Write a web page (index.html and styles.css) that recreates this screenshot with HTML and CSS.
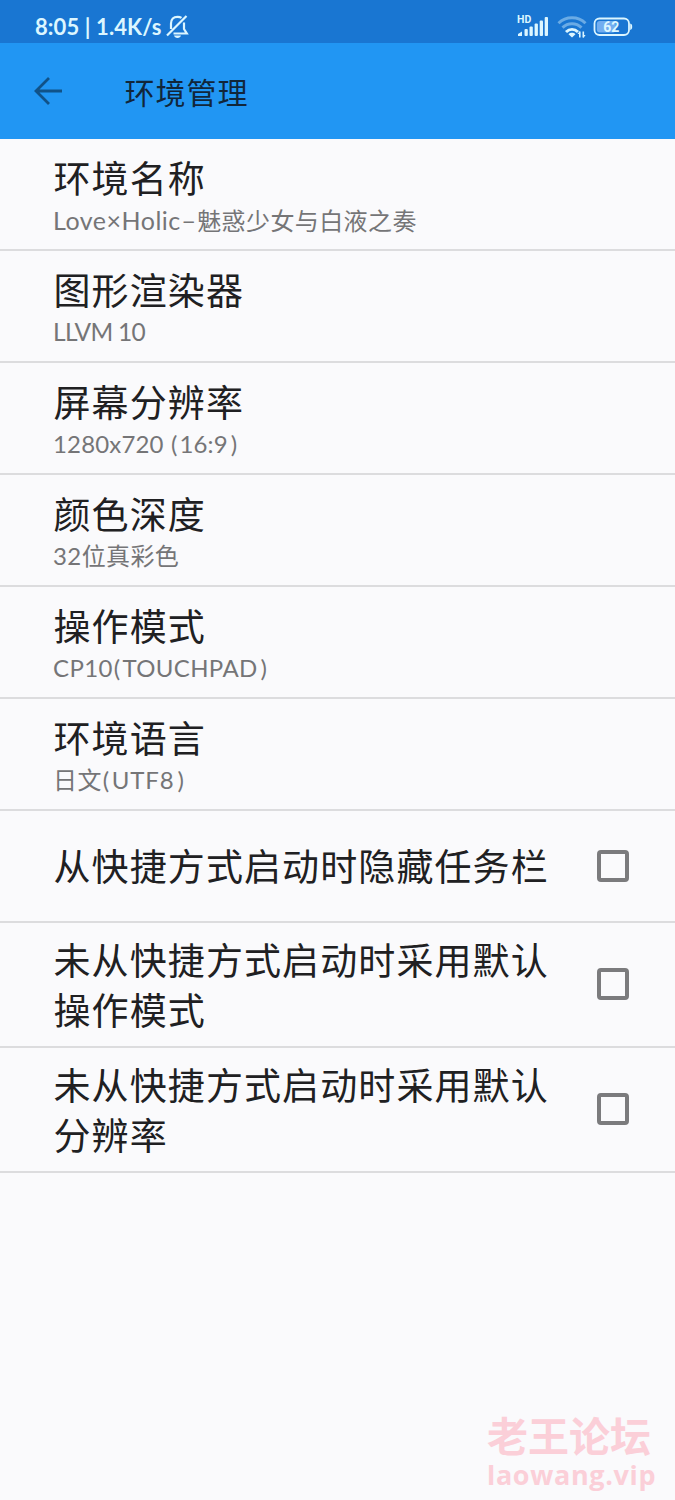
FILE: index.html
```html
<!DOCTYPE html>
<html lang="zh-CN">
<head>
<meta charset="utf-8">
<title>环境管理</title>
<link rel="stylesheet" href="styles.css">
</head>
<body>
<div class="screen">
  <div class="status">
    <span class="clock">8:05 | 1.4K/s</span>
    <svg class="bell" width="24" height="26" viewBox="0 0 24 26" fill="none" stroke="currentColor" stroke-width="2.200">
      <path d="M5 15V9.500C5 5 7.500 2.800 11.500 2.800c1.600 0 2.900.3 4 1.100M18 8.500v6.500l2.800 4.500H7.500M1 21.500 20.500 2"/>
      <path d="M8 21.500h7c-.4 1.600-1.700 2.500-3.500 2.500S8.400 23.100 8 21.500z" fill="currentColor" stroke="none"/>
    </svg>
    <div class="indicators">
      <div class="mobile">
        <span class="hd">HD</span>
        <svg width="32" height="22" viewBox="0 0 32 22" fill="currentColor">
          <path d="M1 20v-2l4-2.500V20z"/><rect x="7.500" y="13" width="3.300" height="7" rx="1"/><rect x="12.500" y="10.500" width="3.300" height="9.500" rx="1"/><rect x="17.600" y="7.500" width="3.300" height="12.500" rx="1"/><rect x="22.700" y="4.500" width="3.300" height="15.500" rx="1"/><rect x="27.700" y="1" width="3.300" height="19" rx="1"/>
        </svg>
      </div>
      <svg class="wifi" width="30" height="24" viewBox="0 0 30 24" fill="none" stroke="currentColor" stroke-width="3">
        <g opacity=".42"><path d="M1.500 8.200c7.500-7.300 19.500-7.300 27 0M5.500 12.600c5.400-5.200 13.600-5.200 19 0"/></g>
        <path d="M9 17c3.600-3.500 8.400-3.500 12 0"/>
        <path d="M11.500 19.200c1.900-1.900 5.100-1.900 7 0L15 22.500z" fill="currentColor" stroke="none"/>
        <path d="M22.800 16.500v6M26.300 16.500v6" stroke-width="1.600"/><path d="m20.500 19 2.300-3v3zM28.600 20l-2.300 3V20z" fill="currentColor" stroke="none"/>
      </svg>
      <svg class="battery" width="40" height="20" viewBox="0 0 40 20">
        <rect x="3.800" y="4" width="19" height="11.500" rx="3" fill="#72aef0"/>
        <rect x="1.500" y="1.500" width="34.500" height="16.500" rx="5" fill="none" stroke="currentColor" stroke-width="1.800"/>
        <path d="M37.200 6.500c1.500.5 2 1.300 2 3.200s-.5 2.700-2 3.200z" fill="currentColor"/>
        <text x="18.300" y="15" text-anchor="middle" class="level">62</text>
      </svg>
    </div>
  </div>
  <header class="toolbar">
    <svg class="back" width="30" height="30" viewBox="0 0 30 30" fill="none" stroke="currentColor" stroke-width="2.800"><path d="M29 15H3M16 2 3 15l13 13"/></svg>
    <h1>环境管理</h1>
  </header>
  <main>
    <div class="row"><div class="title">环境名称</div><div class="value"><span class="name">Love×Holic</span><span class="dash">−</span>魅惑少女与白液之奏</div></div>
    <div class="row"><div class="title">图形渲染器</div><div class="value renderer">LLVM 10</div></div>
    <div class="row"><div class="title">屏幕分辨率</div><div class="value resolution">1280x720 <span class="paren">(</span>16:9<span class="close">)</span></div></div>
    <div class="row"><div class="title">颜色深度</div><div class="value">32位真彩色</div></div>
    <div class="row"><div class="title">操作模式</div><div class="value mode">CP10<span class="paren">(</span>TOUCHPAD<span class="close">)</span></div></div>
    <div class="row"><div class="title">环境语言</div><div class="value">日文<span class="paren">(</span><span class="utf">UTF8</span><span class="close">)</span></div></div>
    <div class="row check"><div class="title">从快捷方式启动时隐藏任务栏</div><span class="box"></span></div>
    <div class="row check tall"><div class="title">未从快捷方式启动时采用默认<br>操作模式</div><span class="box"></span></div>
    <div class="row check tall"><div class="title">未从快捷方式启动时采用默认<br>分辨率</div><span class="box"></span></div>
  </main>
  <footer class="mark"><div class="forum">老王论坛</div><div class="site">laowang.vip</div></footer>
</div>
</body>
</html>
```
FILE: styles.css
```css
* { box-sizing: border-box; }
body { margin: 0; background: #fafafc; font-family: Lato, "Noto Sans CJK SC", sans-serif; }
.screen { width: 675px; height: 1500px; display: flex; flex-direction: column; overflow: hidden; }
.status { height: 43px; flex: none; background: #1976d2; color: #dcf6ff; display: flex; align-items: center; padding: 10px 42px 0 35px; }
.clock { font-size: 22px; line-height: 32px; font-weight: 700; letter-spacing: .1px; white-space: nowrap; width: 131px; }
.bell { flex: none; }
.indicators { margin-left: auto; display: flex; align-items: center; }
.mobile { position: relative; width: 32px; height: 22px; margin-right: 8px; }
.hd { position: absolute; left: 0; top: -2px; font: 700 10.500px/12px Roboto, sans-serif; }
.wifi { margin-right: 6px; }
.level { font: 700 14px Roboto, sans-serif; fill: currentColor; }
.toolbar { height: 96px; flex: none; background: #2196f3; display: flex; align-items: center; padding-left: 33px; }
.back { color: #105288; }
h1 { margin: 1px 0 0 61.500px; font-size: 30px; line-height: 44px; font-weight: 400; letter-spacing: 1px; color: #11263a; }
.row { height: 112px; border-bottom: 2px solid #dcdcde; padding: 13px 46px 0 53px; }
.title { font-family: "Noto Sans CJK SC", sans-serif; font-size: 37px; line-height: 50px; letter-spacing: 1.100px; color: #202022; white-space: nowrap; }
.row .title { margin-left: .5px; }
.value { margin-top: 2px; font-size: 24px; line-height: 32px; letter-spacing: .4px; color: #757577; white-space: nowrap; }
.name { font-size: 25px; letter-spacing: .5px; }
.dash { display: inline-block; width: 16.500px; text-align: center; }
.renderer { font-size: 24.500px; letter-spacing: -.7px; }
.resolution { letter-spacing: .15px; }
.mode { letter-spacing: .35px; }
.paren { margin: 0 2px 0 1px; }
.close { margin-left: 3px; }
.utf { letter-spacing: .9px; }
.check { display: flex; align-items: center; justify-content: space-between; padding-top: 0; padding-bottom: 0; }
.check .title { margin-top: -2px; }
.tall { height: 125px; }
.box { width: 32px; height: 32px; flex: none; border: 4px solid #7b7b7d; border-radius: 4px; }
.tall .box { margin-top: -2px; }
.mark { margin: auto 0 10px 487px; color: #fbcfd8; font-family: "Noto Sans CJK SC", sans-serif; font-weight: 700; white-space: nowrap; }
.forum { font-size: 41px; line-height: 48px; margin-bottom: 2px; }
.site { font-family: "Open Sans", sans-serif; font-size: 27px; line-height: 30px; letter-spacing: .65px; }
```
